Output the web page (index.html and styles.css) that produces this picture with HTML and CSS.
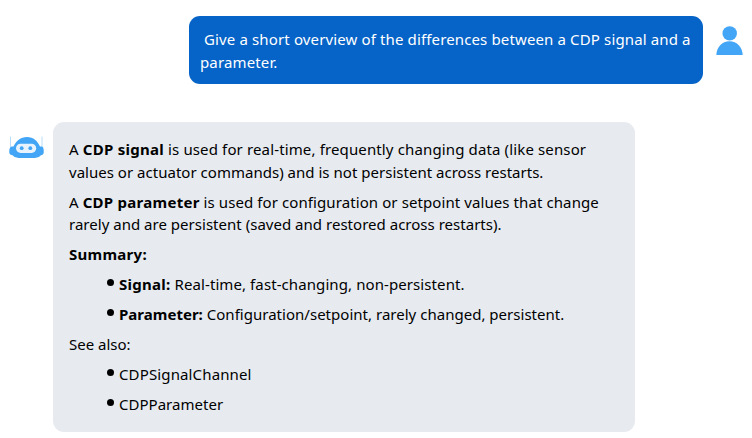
FILE: index.html
```html
<!DOCTYPE html>
<html lang="en">
<head>
<meta charset="utf-8">
<title>Chat</title>
<link rel="stylesheet" href="styles.css">
</head>
<body>
<main class="chat">
  <section class="message user">
    <div class="bubble">
      <p><span class="line indent wide">Give a short overview of the differences between a CDP signal and a</span> <span class="line wide">parameter.</span></p>
    </div>
    <svg class="avatar person" viewBox="0 0 27 30" aria-hidden="true">
      <circle cx="13.700" cy="7.400" r="7.200"/>
      <path d="M.3 29C.6 21.200 6 15.200 13.500 15.200S26.400 21.200 26.700 29Z"/>
    </svg>
  </section>
  <section class="message bot">
    <svg class="avatar robot" viewBox="0 0 36 24" aria-hidden="true">
      <path class="antenna" d="M1.500 .5V12M33 .5V12"/>
      <path d="M2.500 10.500H4.500C7 5 11.500 1 18 1S28.500 5 31 10.500H33Q34.700 11 34.700 14V17Q34.500 19 32 19.300Q30 22 26 22H9.500Q5.500 22 3.500 19.300Q.5 19 .3 17V14Q.5 11 2.500 10.500Z"/>
      <rect class="face" x="7" y="7.700" width="20.200" height="9.200" rx="4.600"/>
      <circle cx="12.700" cy="12.200" r="1.900"/>
      <circle cx="21.300" cy="12.200" r="1.900"/>
    </svg>
    <div class="bubble">
      <p><span class="line wide">A <b>CDP signal</b> is used for real-time, frequently changing data (like sensor</span> <span class="line tight">values or actuator commands) and is not persistent across restarts.</span></p>
      <p><span class="line medium">A <b>CDP parameter</b> is used for configuration or setpoint values that change</span> <span class="line tight">rarely and are persistent (saved and restored across restarts).</span></p>
      <p><b>Summary:</b></p>
      <ul>
        <li><span class="medium"><b>Signal:</b> Real-time, fast-changing, non-persistent.</span></li>
        <li><span class="tight"><b class="tight">Parameter:</b> Configuration/setpoint, rarely changed, persistent.</span></li>
      </ul>
      <p>See also:</p>
      <ul>
        <li><span class="wide">CDPSignalChannel</span></li>
        <li><span class="tight">CDPParameter</span></li>
      </ul>
    </div>
  </section>
</main>
</body>
</html>
```
FILE: styles.css
```css
* { box-sizing: border-box; }
body {
  margin: 0;
  background: #fff;
  color: #000;
  font: 15px/22.5px "Noto Sans", "Open Sans", sans-serif;
  letter-spacing: 0;
}
b { letter-spacing: 0.27px; }
.tight { letter-spacing: 0.02px; }
.medium { letter-spacing: 0.09px; }
.wide { letter-spacing: 0.135px; }
.chat {
  display: flex;
  flex-direction: column;
  gap: 38px;
  padding-top: 16px;
}
.message { display: flex; align-items: flex-start; }
.bubble { border-radius: 11px; }
.line { display: block; white-space: nowrap; }
p, ul { margin: 0; }
.avatar { flex: none; fill: #42a5f5; }

.user { justify-content: flex-end; padding-right: 9px; }
.user .bubble {
  width: 514px;
  height: 68px;
  padding: 12px 10px 0 11px;
  background: #0663c7;
  color: #fff;
}
.indent { padding-left: 4px; }
.person { width: 27px; height: 30px; margin: 10px 0 0 13px; }

.bot { padding-left: 9px; }
.robot { width: 36px; height: 24px; margin: 14px 8px 0 0; }
.antenna { fill: none; stroke: #b9defb; stroke-width: 1; }
.face { fill: #e8f3fd; }
.bot .bubble {
  display: flex;
  flex-direction: column;
  gap: 7.5px;
  width: 582px;
  height: 310px;
  padding: 16px 16px 0;
  background: #e7ebf0;
}
ul {
  display: flex;
  flex-direction: column;
  gap: 7.5px;
  padding: 0;
  list-style: none;
}
li { display: flex; gap: 5px; align-items: flex-start; padding-left: 38px; white-space: nowrap; }
li::before {
  content: "";
  flex: none;
  width: 7px;
  height: 7px;
  margin-top: 6px;
  border-radius: 50%;
  background: #000;
}
```
